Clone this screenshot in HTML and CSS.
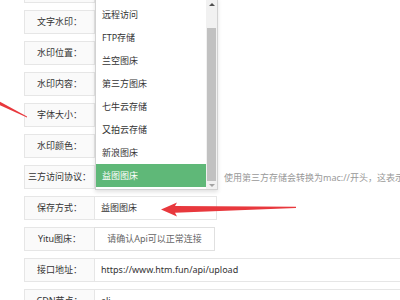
FILE: index.html
```html
<!DOCTYPE html>
<html lang="zh">
<head>
<meta charset="utf-8">
<title>存储设置</title>
<link rel="stylesheet" href="styles.css">
</head>
<body>
<div class="form">
  <div class="row"><div class="label"></div><div class="field sel"></div></div>
  <div class="row"><div class="label">文字水印：</div><div class="field sel"></div></div>
  <div class="row"><div class="label">水印位置：</div><div class="field sel"></div></div>
  <div class="row"><div class="label">水印内容：</div><div class="field sel"></div></div>
  <div class="row"><div class="label">字体大小：</div><div class="field sel"></div></div>
  <div class="row"><div class="label">水印颜色：</div><div class="field sel"></div></div>
  <div class="row"><div class="label">三方访问协议：</div><div class="field sel"></div><div class="aux">使用第三方存储会转换为mac://开头，这表示</div></div>
  <div class="row"><div class="label">保存方式：</div><div class="field sel">益图图床<i class="caret"></i></div></div>
  <div class="row"><div class="label">Yitu图床：</div><div class="btn">请确认Api可以正常连接</div></div>
  <div class="row"><div class="label">接口地址：</div><div class="field wide">https://www.htm.fun/api/upload</div></div>
  <div class="row"><div class="label">CDN节点：</div><div class="field wide">ali</div></div>
</div>

<div class="dropdown">
  <ul class="items">
    <li>远程访问</li>
    <li>FTP存储</li>
    <li>兰空图床</li>
    <li>第三方图床</li>
    <li>七牛云存储</li>
    <li>又拍云存储</li>
    <li>新浪图床</li>
    <li class="on">益图图床</li>
  </ul>
  <div class="scroll">
    <div class="up"></div>
    <div class="thumb"></div>
    <div class="down"></div>
  </div>
</div>

<svg class="arrows" width="400" height="300" viewBox="0 0 400 300">
  <polygon points="-4,99.5 -4,103.5 27,117.5 27,116.6" fill="#e8383d"/>
  <polygon points="161,209.5 177,202.5 175,206 296,206.8 296,208 175,212.8 177,216.5" fill="#e8383d"/>
</svg>
</body>
</html>
```
FILE: styles.css
```css
html, body {
  margin: 0;
  padding: 0;
  background: #fff;
  width: 400px;
  height: 300px;
  overflow: hidden;
}
body {
  font-family: "Noto Sans", "Noto Sans CJK SC", sans-serif;
  font-size: 9px;
  color: #333;
}
.form {
  margin-top: -21px;
  padding-left: 24px;
}
.row {
  display: flex;
  align-items: center;
  height: 24px;
  margin-bottom: 7px;
}
.label {
  box-sizing: border-box;
  width: 71px;
  height: 24px;
  line-height: 22px;
  border: 1px solid #e6e6e6;
  background: #fafafa;
  text-align: center;
  white-space: nowrap;
  color: #333;
  flex: none;
}
.field {
  box-sizing: border-box;
  height: 24px;
  line-height: 22px;
  border: 1px solid #e6e6e6;
  border-left: none;
  padding-left: 6px;
  white-space: nowrap;
  position: relative;
  flex: none;
}
.sel {
  width: 122px;
}
.wide {
  flex: 1;
  margin-right: -20px;
}
.caret {
  position: absolute;
  right: 7px;
  top: 10px;
  border: 3px solid transparent;
  border-top-color: #d8d8d8;
}
.aux {
  margin-left: 7px;
  color: #999;
  white-space: nowrap;
}
.btn {
  box-sizing: border-box;
  width: 121px;
  height: 24px;
  line-height: 22px;
  margin-left: -1px;
  border: 1px solid #e0e0e0;
  background: #fff;
  color: #666;
  text-align: center;
  white-space: nowrap;
}
.dropdown {
  position: absolute;
  left: 95px;
  top: -2px;
  box-sizing: border-box;
  width: 123px;
  height: 192px;
  border: 1px solid #d2d2d2;
  background: #fff;
  box-shadow: 0 2px 4px rgba(0,0,0,.12);
  display: flex;
}
.items {
  list-style: none;
  margin: 0;
  padding: 4px 0 2px;
  flex: 1;
}
.items li {
  height: 23px;
  line-height: 23px;
  padding-left: 6px;
  color: #333;
  white-space: nowrap;
}
.items li.on {
  background: #5fb878;
  color: #fff;
}
.scroll {
  width: 11px;
  background: #f1f1f1;
  display: flex;
  flex-direction: column;
  align-items: center;
}
.up {
  margin-top: 4px;
  width: 0;
  height: 0;
  border-left: 3px solid transparent;
  border-right: 3px solid transparent;
  border-bottom: 3px solid #505050;
}
.thumb {
  margin-top: 22px;
  width: 9px;
  height: 153px;
  background: #c1c1c1;
}
.down {
  margin-top: 3px;
  width: 0;
  height: 0;
  border-left: 3px solid transparent;
  border-right: 3px solid transparent;
  border-top: 3px solid #a3a3a3;
}
.arrows {
  position: absolute;
  left: 0;
  top: 0;
  pointer-events: none;
}
```
